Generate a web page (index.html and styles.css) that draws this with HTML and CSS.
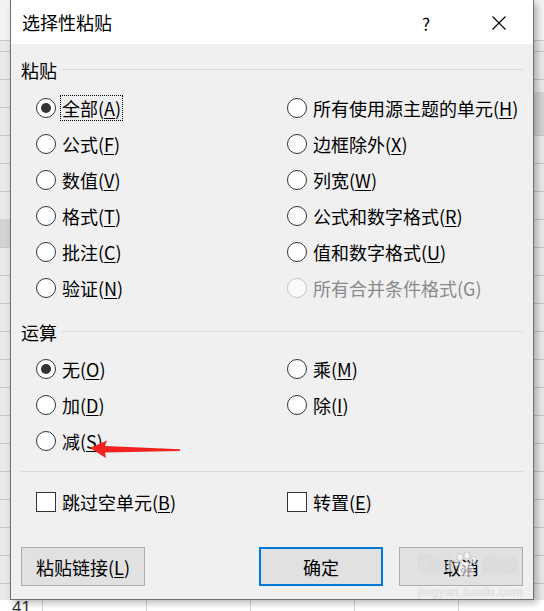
FILE: index.html
```html
<!DOCTYPE html>
<html lang="zh-CN">
<head>
<meta charset="utf-8">
<title>选择性粘贴</title>
<link rel="stylesheet" href="styles.css">
</head>
<body>
<div class="screen">
  <div class="dialog">
    <div class="titlebar">
      <span class="title">选择性粘贴</span>
      <span class="help">?</span>
      <svg class="close" width="14" height="14" viewBox="0 0 14 14"><path d="M0.5 0.5 L13.5 13.5 M13.5 0.5 L0.5 13.5" stroke="#000" stroke-width="1.1" fill="none"/></svg>
    </div>
    <div class="content">
      <div class="group"><span>粘贴</span><span class="rule"></span></div>
      <div class="options first">
        <div class="opt"><span class="radio on"></span><span class="focus">全部(<u>A</u>)</span></div>
        <div class="opt"><span class="radio"></span><span>所有使用源主题的单元(<u>H</u>)</span></div>
        <div class="opt"><span class="radio"></span><span>公式(<u>F</u>)</span></div>
        <div class="opt"><span class="radio"></span><span>边框除外(<u>X</u>)</span></div>
        <div class="opt"><span class="radio"></span><span>数值(<u>V</u>)</span></div>
        <div class="opt"><span class="radio"></span><span>列宽(<u>W</u>)</span></div>
        <div class="opt"><span class="radio"></span><span>格式(<u>T</u>)</span></div>
        <div class="opt"><span class="radio"></span><span>公式和数字格式(<u>R</u>)</span></div>
        <div class="opt"><span class="radio"></span><span>批注(<u>C</u>)</span></div>
        <div class="opt"><span class="radio"></span><span>值和数字格式(<u>U</u>)</span></div>
        <div class="opt"><span class="radio"></span><span>验证(<u>N</u>)</span></div>
        <div class="opt disabled"><span class="radio"></span><span>所有合并条件格式(G)</span></div>
      </div>
      <div class="group second"><span>运算</span><span class="rule"></span></div>
      <div class="options ops">
        <div class="opt"><span class="radio on"></span><span>无(<u>O</u>)</span></div>
        <div class="opt"><span class="radio"></span><span>乘(<u>M</u>)</span></div>
        <div class="opt"><span class="radio"></span><span>加(<u>D</u>)</span></div>
        <div class="opt"><span class="radio"></span><span>除(<u>I</u>)</span></div>
        <div class="opt"><span class="radio"></span><span>减(<u>S</u>)</span></div>
      </div>
      <div class="separator"></div>
      <div class="options checks">
        <div class="opt"><span class="check"></span><span>跳过空单元(<u>B</u>)</span></div>
        <div class="opt"><span class="check"></span><span>转置(<u>E</u>)</span></div>
      </div>
      <div class="buttons">
        <button class="btn">粘贴链接(<u>L</u>)</button>
        <span class="spacer"></span>
        <button class="btn primary">确定</button>
        <button class="btn">取消</button>
      </div>
    </div>
  </div>
  <div class="sheet-row"><span class="rownum">41</span></div>

  <svg class="arrow" width="100" height="26" viewBox="0 0 100 26">
    <polygon points="4,11 21,3.5 19,9 94,12.2 94,14 19,15.5 20,21" fill="#f2231f"/>
  </svg>

  <div class="watermark">
    <div class="wm-logo">
      <span class="wm-bai">Bai</span>
      <svg class="wm-paw" width="26" height="26" viewBox="0 0 26 26">
        <g fill="rgba(255,255,255,0.6)" stroke="rgba(150,150,150,0.35)" stroke-width="1">
          <ellipse cx="7" cy="6" rx="3" ry="3.6"/>
          <ellipse cx="14" cy="4.5" rx="3" ry="3.6"/>
          <ellipse cx="20.5" cy="9" rx="2.8" ry="3.4"/>
          <ellipse cx="3.5" cy="12" rx="2.6" ry="3.2"/>
          <path d="M5 21 C5 14 9 11 13 11 C17 11 21 14 21 21 C21 24 17 24.5 13 24.5 C9 24.5 5 24 5 21 Z"/>
        </g>
        <text x="13" y="22" font-size="9" text-anchor="middle" fill="rgba(150,150,150,0.5)" font-family="Liberation Sans, sans-serif" font-weight="bold">du</text>
      </svg>
      <span class="wm-jy">经验</span>
    </div>
    <div class="wm-url">jingyan.baidu.com</div>
  </div>
</div>
</body>
</html>
```
FILE: styles.css
```css
html, body {
  margin: 0;
  padding: 0;
  width: 544px;
  height: 611px;
  overflow: hidden;
}

.screen {
  position: relative;
  width: 544px;
  height: 611px;
  overflow: hidden;
  font-family: "Noto Sans CJK SC", "Noto Sans", sans-serif;
  color: #000;
  background:
    linear-gradient(#f3f3f3, #f3f3f3) 0 0 / 100% 40px no-repeat,
    linear-gradient(#c9c9c9, #c9c9c9) 0 40px / 100% 1px no-repeat,
    linear-gradient(#d2d2d2, #d2d2d2) 0 219px / 10px 28px no-repeat,
    linear-gradient(#d2d2d2, #d2d2d2) 533px 92px / 11px 43px no-repeat,
    linear-gradient(to bottom, transparent 27px, #c6c6c6 27px) 0 -4px / 100% 28px repeat-y,
    #e9e9e9;
}

.dialog {
  margin-left: 10px;
  width: 524px;
  height: 600px;
  box-sizing: border-box;
  border: 1px solid #707070;
  border-top: none;
  background: #f0f0f0;
  box-shadow: 3px 3px 7px rgba(0, 0, 0, 0.28);
  display: flex;
  flex-direction: column;
  position: relative;
  z-index: 1;
}

.titlebar {
  height: 44px;
  flex: none;
  background: #fff;
  display: flex;
  align-items: center;
  padding-left: 11px;
}

.title {
  flex: 1;
  font-size: 18px;
  line-height: 24px;
}

.help {
  font-size: 17px;
  line-height: 20px;
  margin-right: 62px;
  margin-top: 3px;
}

.close {
  margin-right: 27px;
  margin-top: 2px;
  display: block;
}

.content {
  padding: 0 10px;
  font-size: 18px;
  line-height: 22px;
}

.group {
  display: flex;
  align-items: center;
  gap: 5px;
  height: 24px;
  margin-top: 14px;
}

.group.second {
  margin-top: 14px;
}

.rule {
  flex: 1;
  height: 1px;
  background: #d9d9d9;
  margin-top: -2px;
}

.options {
  display: grid;
  grid-template-columns: 251px 1fr;
  grid-auto-rows: 36px;
  margin-left: 15px;
}

.options.first {
  margin-top: 8px;
}

.options.ops {
  margin-top: 7px;
}

.options.checks {
  margin-top: 12px;
}

.opt {
  display: flex;
  align-items: center;
  gap: 6px;
  white-space: nowrap;
}

.opt u {
  text-decoration-thickness: 1px;
  text-underline-offset: 2px;
}

.radio {
  width: 20px;
  height: 20px;
  box-sizing: border-box;
  border: 1px solid #333;
  border-radius: 50%;
  background: #fff;
  display: grid;
  place-items: center;
  flex: none;
}

.radio.on::after {
  content: "";
  width: 10px;
  height: 10px;
  border-radius: 50%;
  background: #333;
}

.opt.disabled {
  color: #8a8a8a;
}

.opt.disabled .radio {
  border-color: #c6c6c6;
  background: #f9f9f9;
}

.focus {
  outline: 1px dotted #000;
  outline-offset: 1px;
}

.check {
  width: 20px;
  height: 20px;
  box-sizing: border-box;
  border: 1px solid #333;
  background: #fff;
  flex: none;
}

.separator {
  margin-top: 12px;
  height: 1px;
  background: #d9d9d9;
}

.buttons {
  display: flex;
  margin-top: 27px;
  height: 39px;
  gap: 16px;
}

.spacer {
  flex: 1;
}

.btn {
  width: 124px;
  height: 39px;
  box-sizing: border-box;
  background: #e1e1e1;
  border: 1px solid #adadad;
  font-family: "Noto Sans CJK SC", "Noto Sans", sans-serif;
  font-size: 18px;
  color: #000;
  padding: 0;
  margin: 0;
}

.btn.primary {
  border: 2px solid #0078d7;
}

.btn u {
  text-decoration-thickness: 1px;
  text-underline-offset: 2px;
}

.sheet-row {
  height: 11px;
  overflow: hidden;
  background:
    linear-gradient(to right, transparent 103px, #d4d4d4 103px) -61px 0 / 104px 100% repeat-x,
    #fff;
}

.rownum {
  display: block;
  margin-left: 12px;
  margin-top: -1px;
  font-family: "Liberation Sans", sans-serif;
  font-size: 17px;
  line-height: 17px;
  color: #333;
}

.arrow {
  position: absolute;
  left: 86px;
  top: 437px;
  z-index: 2;
}

.watermark {
  position: absolute;
  left: 418px;
  top: 551px;
  z-index: 2;
  color: rgba(255, 255, 255, 0.55);
  text-shadow: 0 0 1px rgba(120, 120, 120, 0.4);
}

.wm-logo {
  display: flex;
  align-items: center;
  height: 26px;
}

.wm-bai {
  font-family: "Liberation Sans", sans-serif;
  font-weight: bold;
  font-size: 23px;
  line-height: 26px;
  letter-spacing: -0.5px;
}

.wm-paw {
  display: block;
  margin-left: 1px;
}

.wm-jy {
  font-size: 18px;
  line-height: 26px;
  margin-left: 3px;
  font-weight: bold;
}

.wm-url {
  font-family: "Liberation Sans", sans-serif;
  font-size: 12px;
  line-height: 12px;
  margin-top: 9px;
  letter-spacing: 0.5px;
}
```
